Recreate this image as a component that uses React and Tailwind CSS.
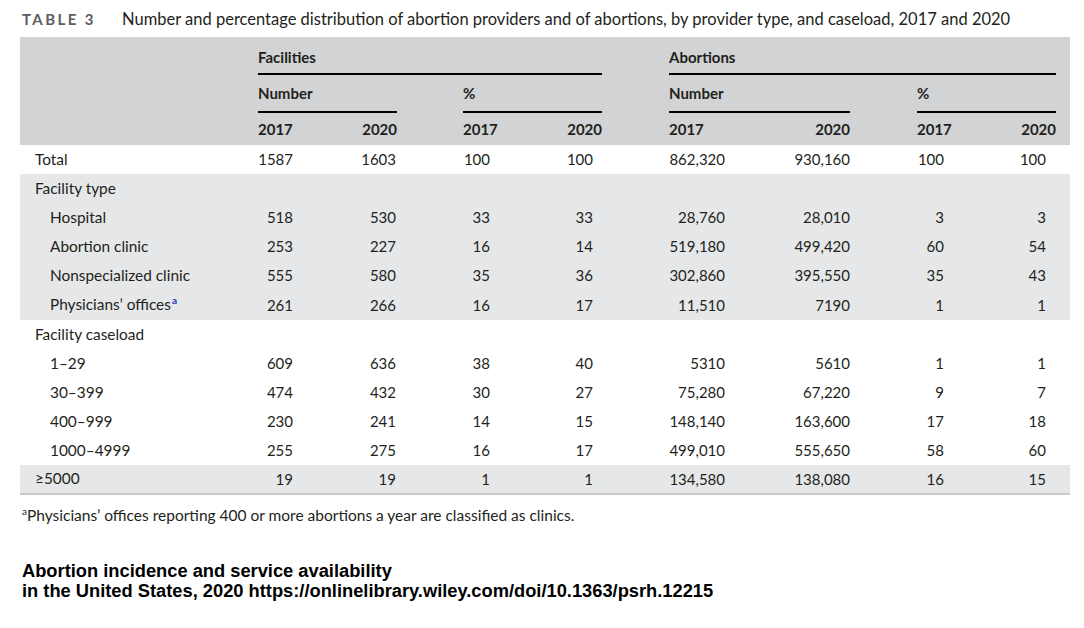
import React from "react";

const rows = [
  { label: "Total", indent: false, bg: false, h: "h-[29px]", v: ["1587", "1603", "100", "100", "862,320", "930,160", "100", "100"] },
  { label: "Facility type", indent: false, bg: true, h: "h-[29px]", v: null },
  { label: "Hospital", indent: true, bg: true, h: "h-[29px]", v: ["518", "530", "33", "33", "28,760", "28,010", "3", "3"] },
  { label: "Abortion clinic", indent: true, bg: true, h: "h-[29px]", v: ["253", "227", "16", "14", "519,180", "499,420", "60", "54"] },
  { label: "Nonspecialized clinic", indent: true, bg: true, h: "h-[29px]", v: ["555", "580", "35", "36", "302,860", "395,550", "35", "43"] },
  { label: "Physicians\u2019 offices", sup: true, indent: true, bg: true, h: "h-[30px]", v: ["261", "266", "16", "17", "11,510", "7190", "1", "1"] },
  { label: "Facility caseload", indent: false, bg: false, h: "h-[29px]", v: null },
  { label: "1\u201329", indent: true, bg: false, h: "h-[29px]", v: ["609", "636", "38", "40", "5310", "5610", "1", "1"] },
  { label: "30\u2013399", indent: true, bg: false, h: "h-[29px]", v: ["474", "432", "30", "27", "75,280", "67,220", "9", "7"] },
  { label: "400\u2013999", indent: true, bg: false, h: "h-[29px]", v: ["230", "241", "14", "15", "148,140", "163,600", "17", "18"] },
  { label: "1000\u20134999", indent: true, bg: false, h: "h-[29px]", v: ["255", "275", "16", "17", "499,010", "555,650", "58", "60"] },
  { label: "\u22655000", indent: false, bg: true, last: true, h: "h-[30px]", v: ["19", "19", "1", "1", "134,580", "138,080", "16", "15"] },
];

const cellPad = ["pr-[34px]", "pr-[1px]", "pr-[42px]", "pr-[9px]", "pr-[34px]", "pr-[0px]", "pr-[42px]", "pr-[10px]"];
const gridCols = "grid grid-cols-[238px_69px_70px_66px_69px_70px_67px_90px_91px_67px_69px_70px_14px]";

function Row({ r }) {
  const base = `${gridCols} ${r.h} ${r.bg ? "bg-[#e6e7e8]" : ""} ${r.last ? "border-b-2 border-[#c8c9cb]" : ""}`;
  const cells = [];
  if (r.v) {
    const pos = [2, 3, 5, 6, 8, 9, 11, 12];
    r.v.forEach((val, i) => {
      cells.push(
        <div key={i} className={`flex items-center justify-end ${cellPad[i]}`} style={{ gridColumnStart: pos[i] }}>
          {val}
        </div>
      );
    });
  }
  return (
    <div className={base}>
      <div className={`flex items-center ${r.indent ? "pl-[30px]" : "pl-[15px]"} whitespace-nowrap text-[15.4px]`}>
        {r.label}
        {r.sup && <span className="text-[10px] text-[#1f3bb0] font-bold relative top-[-5px] ml-[1px] leading-none">a</span>}
      </div>
      {cells}
    </div>
  );
}

export default function App() {
  return (
    <div className="w-[1084px] h-[628px] bg-white text-[#231f20] font-['Lato','Liberation_Sans',sans-serif] overflow-hidden">
      <div className="flex items-baseline h-[37px] pt-[7px] pl-[22px]">
        <span className="font-bold text-[15px] tracking-[2.4px] text-[#5c5d5f] w-[100px]">TABLE 3</span>
        <span className="text-[16.5px] whitespace-nowrap">
          Number and percentage distribution of abortion providers and of abortions, by provider type, and caseload, 2017 and 2020
        </span>
      </div>

      <div className="ml-[20px] w-[1050px] text-[15px]">
        <div className="bg-[#d1d3d4] font-bold">
          <div className={gridCols}>
            <div className="col-start-2 col-span-5 h-[38px] border-b-2 border-black flex items-center pt-[4px]">Facilities</div>
            <div className="col-start-8 col-span-5 h-[38px] border-b-2 border-black flex items-center pt-[4px]">Abortions</div>
          </div>
          <div className={gridCols}>
            <div className="col-start-2 col-span-2 h-[38px] border-b-2 border-black flex items-center">Number</div>
            <div className="col-start-5 col-span-2 h-[38px] border-b-2 border-black flex items-center">%</div>
            <div className="col-start-8 col-span-2 h-[38px] border-b-2 border-black flex items-center">Number</div>
            <div className="col-start-11 col-span-2 h-[38px] border-b-2 border-black flex items-center">%</div>
          </div>
          <div className={`${gridCols} h-[32px]`}>
            <div className="col-start-2 flex items-center">2017</div>
            <div className="col-start-3 flex items-center justify-end">2020</div>
            <div className="col-start-5 flex items-center">2017</div>
            <div className="col-start-6 flex items-center justify-end">2020</div>
            <div className="col-start-8 flex items-center">2017</div>
            <div className="col-start-9 flex items-center justify-end">2020</div>
            <div className="col-start-11 flex items-center">2017</div>
            <div className="col-start-12 flex items-center justify-end">2020</div>
          </div>
        </div>
        {rows.map((r, i) => (
          <Row key={i} r={r} />
        ))}
      </div>

      <div className="pl-[22px] pt-[9px] text-[15.5px] whitespace-nowrap">
        <span className="text-[10px] relative top-[-6px] leading-none">a</span>Physicians&#8217; offices reporting 400 or more abortions a year are classified as clinics.
      </div>

      <div className="pl-[22px] pt-[34px] font-['Liberation_Sans',Arial,sans-serif] font-bold text-[18.3px] leading-[20px] text-black">
        <div>Abortion incidence and service availability</div>
        <div>in the United States, 2020 https://onlinelibrary.wiley.com/doi/10.1363/psrh.12215</div>
      </div>
    </div>
  );
}
